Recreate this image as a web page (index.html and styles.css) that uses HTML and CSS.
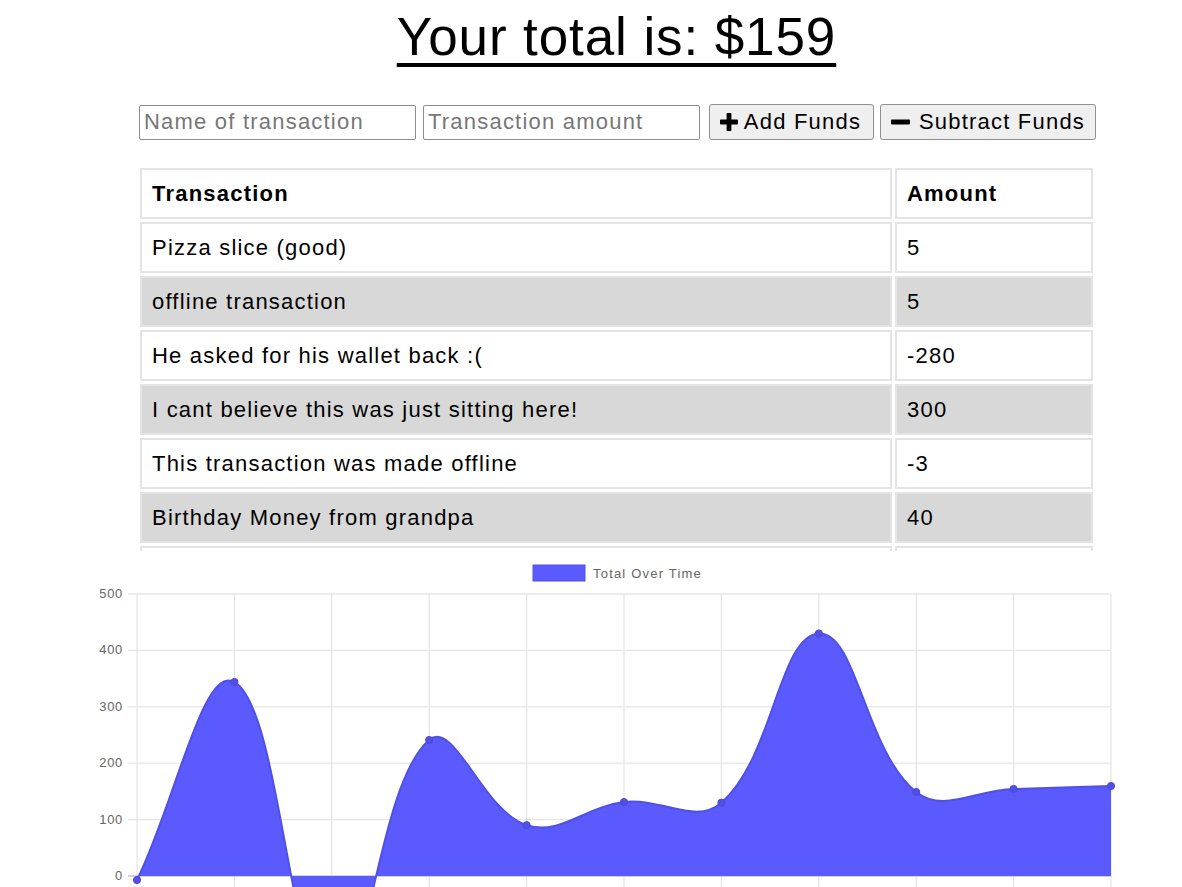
FILE: index.html
```html
<!DOCTYPE html>
<html lang="en">
<head>
<meta charset="utf-8">
<title>Budget Tracker</title>
<link rel="stylesheet" href="styles.css">
</head>
<body>
<main class="wrapper">
  <h1 class="total">Your total is: $159</h1>
  <form class="entry">
    <input class="field field-name" type="text" placeholder="Name of transaction">
    <input class="field field-amount" type="number" placeholder="Transaction amount">
    <button type="button" class="btn btn-add">
      <svg class="icon" width="18" height="18" viewBox="0 0 18 18"><rect x="6.6" y="0" width="4.8" height="18" rx="0.8"/><rect x="0" y="6.6" width="18" height="4.8" rx="0.8"/></svg>
      <span>Add Funds</span>
    </button>
    <button type="button" class="btn btn-sub">
      <svg class="icon" width="19" height="18" viewBox="0 0 19 18"><rect x="0" y="6.6" width="19" height="4.8" rx="0.8"/></svg>
      <span>Subtract Funds</span>
    </button>
  </form>
  <div class="table-wrap">
    <table class="ledger">
      <thead>
        <tr><th class="col-name">Transaction</th><th class="col-amt">Amount</th></tr>
      </thead>
      <tbody>
        <tr><td>Pizza slice (good)</td><td>5</td></tr>
        <tr><td>offline transaction</td><td>5</td></tr>
        <tr><td>He asked for his wallet back :(</td><td>-280</td></tr>
        <tr><td>I cant believe this was just sitting here!</td><td>300</td></tr>
        <tr><td>This transaction was made offline</td><td>-3</td></tr>
        <tr><td>Birthday Money from grandpa</td><td>40</td></tr>
        <tr class="row-clipped"><td></td><td></td></tr>
      </tbody>
    </table>
  </div>
</main>
<svg class="chart" width="1182" height="420" viewBox="0 551 1182 420">
  <g class="legend">
    <rect x="533" y="565" width="52" height="16" class="legend-box"/>
    <text x="593" y="578" class="legend-text">Total Over Time</text>
  </g>
  <g class="grid">
    <line x1="128" y1="594" x2="1111" y2="594"/>
    <line x1="128" y1="650.4" x2="1111" y2="650.4"/>
    <line x1="128" y1="706.8" x2="1111" y2="706.8"/>
    <line x1="128" y1="763.2" x2="1111" y2="763.2"/>
    <line x1="128" y1="819.6" x2="1111" y2="819.6"/>
    <line x1="128" y1="932.4" x2="1111" y2="932.4"/>
    <line x1="137" y1="594" x2="137" y2="971"/>
    <line x1="234.4" y1="594" x2="234.4" y2="971"/>
    <line x1="331.8" y1="594" x2="331.8" y2="971"/>
    <line x1="429.2" y1="594" x2="429.2" y2="971"/>
    <line x1="526.6" y1="594" x2="526.6" y2="971"/>
    <line x1="624" y1="594" x2="624" y2="971"/>
    <line x1="721.4" y1="594" x2="721.4" y2="971"/>
    <line x1="818.8" y1="594" x2="818.8" y2="971"/>
    <line x1="916.2" y1="594" x2="916.2" y2="971"/>
    <line x1="1013.6" y1="594" x2="1013.6" y2="971"/>
    <line x1="1111" y1="594" x2="1111" y2="971"/>
  </g>
  <line class="zero" x1="128" y1="876" x2="1111" y2="876"/>
  <g class="ticks">
    <text x="123" y="598">500</text>
    <text x="123" y="654.4">400</text>
    <text x="123" y="710.8">300</text>
    <text x="123" y="767.2">200</text>
    <text x="123" y="823.6">100</text>
    <text x="123" y="880">0</text>
  </g>
  <path class="area" d="M137,880 C175.96,800.8 202.71,664.3 234.4,682 C280.63,707.82 289.22,976.12 331.8,988.8 C367.14,999.32 376.7,784.09 429.2,740 C454.62,718.65 482.67,811.2 526.6,825.2 C560.59,836.04 584.51,806.66 624,802.1 C662.43,797.66 695.47,825.14 721.4,802.7 C773.37,757.72 778.9,635.69 818.8,633.5 C856.82,631.41 865.06,751.18 916.2,792 C942.99,813.38 974.64,790.2 1013.6,789 C1052.56,787.8 1072.04,787.2 1111,786 L1111,876 L137,876 Z"/>
  <path class="line" d="M137,880 C175.96,800.8 202.71,664.3 234.4,682 C280.63,707.82 289.22,976.12 331.8,988.8 C367.14,999.32 376.7,784.09 429.2,740 C454.62,718.65 482.67,811.2 526.6,825.2 C560.59,836.04 584.51,806.66 624,802.1 C662.43,797.66 695.47,825.14 721.4,802.7 C773.37,757.72 778.9,635.69 818.8,633.5 C856.82,631.41 865.06,751.18 916.2,792 C942.99,813.38 974.64,790.2 1013.6,789 C1052.56,787.8 1072.04,787.2 1111,786"/>
  <g class="points">
    <circle cx="137" cy="880" r="3.6"/>
    <circle cx="234.4" cy="682" r="3.6"/>
    <circle cx="331.8" cy="988.8" r="3.6"/>
    <circle cx="429.2" cy="740" r="3.6"/>
    <circle cx="526.6" cy="825.2" r="3.6"/>
    <circle cx="624" cy="802.1" r="3.6"/>
    <circle cx="721.4" cy="802.7" r="3.6"/>
    <circle cx="818.8" cy="633.5" r="3.6"/>
    <circle cx="916.2" cy="792" r="3.6"/>
    <circle cx="1013.6" cy="789" r="3.6"/>
    <circle cx="1111" cy="786" r="3.6"/>
  </g>
</svg>
</body>
</html>
```
FILE: styles.css
```css
html, body {
  overflow: hidden;
}

body {
  margin: 0;
  background: #ffffff;
  color: #000000;
  font-family: "Liberation Sans", Arial, Helvetica, sans-serif;
  font-size: 22px;
  letter-spacing: 0.055em;
}

.wrapper {
  width: 959px;
  margin-left: 137px;
}

.total {
  margin: 7px 0 0;
  font-size: 53px;
  font-weight: normal;
  line-height: 60px;
  letter-spacing: 0.9px;
  text-align: center;
  text-decoration: underline;
  text-decoration-thickness: 3.5px;
  text-underline-offset: 8px;
}

.entry {
  display: flex;
  align-items: center;
  margin: 37px 0 0;
  padding-left: 2px;
  height: 36px;
}

.field {
  box-sizing: border-box;
  width: 277px;
  height: 35px;
  margin: 0 7px 0 0;
  padding: 0 4px;
  border: 1px solid #8d8d8d;
  border-radius: 2px;
  background: #ffffff;
  font: inherit;
  letter-spacing: inherit;
  color: #000000;
}

.field::placeholder {
  color: #777777;
}

.field-amount {
  margin-right: 9px;
}

.btn {
  box-sizing: border-box;
  display: flex;
  align-items: center;
  justify-content: center;
  gap: 6px;
  height: 36px;
  margin: 0;
  padding: 0;
  border: 1px solid #909090;
  border-radius: 3px;
  background: #efefef;
  font: inherit;
  letter-spacing: inherit;
  color: #000000;
}

.btn-add {
  width: 165px;
  margin-right: 6px;
  padding-right: 2px;
}

.btn-sub {
  width: 216px;
  gap: 9px;
}

.icon {
  display: block;
  fill: #000000;
  flex: none;
}

.table-wrap {
  margin-top: 25px;
  height: 386px;
  overflow: hidden;
}

.ledger {
  width: 959px;
  border-collapse: separate;
  border-spacing: 3px;
  table-layout: fixed;
}

.col-name {
  width: 752px;
}

.col-amt {
  width: 198px;
}

.ledger th,
.ledger td {
  box-sizing: border-box;
  height: 51px;
  padding: 11px 10px 11px;
  border: 2px solid #e4e4e4;
  line-height: 25px;
  text-align: left;
  vertical-align: top;
  white-space: nowrap;
}

.ledger th {
  font-weight: bold;
}

.ledger tbody tr:nth-child(even) td {
  background: #d8d8d8;
}

.ledger .row-clipped td {
  background: #ffffff;
}

.chart {
  display: block;
}

.legend-box {
  fill: #5a5aff;
  stroke: #5050ee;
  stroke-width: 1;
}

.legend-text,
.ticks text {
  font-family: "Liberation Sans", Arial, Helvetica, sans-serif;
  font-size: 13px;
  letter-spacing: 0.7px;
  fill: #666666;
}

.legend-text {
  letter-spacing: 1.2px;
}

.ticks text {
  text-anchor: end;
}

.grid line {
  stroke: #e6e6e6;
  stroke-width: 1.3;
}

.zero {
  stroke: #c4c4c4;
  stroke-width: 1.3;
}

.area {
  fill: #5a5aff;
  stroke: none;
}

.line {
  fill: none;
  stroke: #5050e6;
  stroke-width: 2;
}

.points circle {
  fill: #5050e8;
  stroke: #4a4ad8;
  stroke-width: 1;
}
```
